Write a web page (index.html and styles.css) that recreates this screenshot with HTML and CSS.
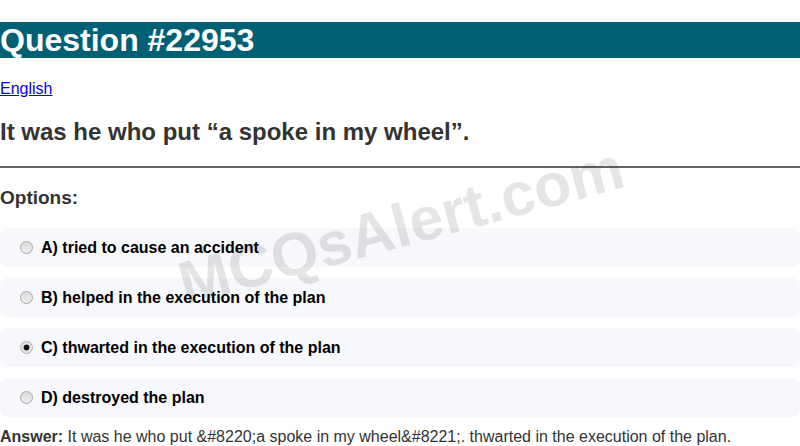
FILE: index.html
```html
<!DOCTYPE html>
<html lang="en">
<head>
<meta charset="utf-8">
<title>Question #22953</title>
<link rel="stylesheet" href="styles.css">
</head>
<body>
<h1 class="title">Question #22953</h1>
<p class="lang"><a href="#">English</a></p>
<h2 class="question">It was he who put “a spoke in my wheel”.</h2>
<hr class="rule">
<h3 class="options-head">Options:</h3>
<div class="options">
  <label class="option"><input type="radio" name="q" disabled> A) tried to cause an accident</label>
  <label class="option"><input type="radio" name="q" disabled> B) helped in the execution of the plan</label>
  <label class="option"><input type="radio" name="q" disabled checked> C) thwarted in the execution of the plan</label>
  <label class="option"><input type="radio" name="q" disabled> D) destroyed the plan</label>
</div>
<p class="answer"><b>Answer:</b> It was he who put &amp;#8220;a spoke in my wheel&amp;#8221;. thwarted in the execution of the plan.</p>
<div class="watermark">MCQsAlert.com</div>
</body>
</html>
```
FILE: styles.css
```css
html, body {
  margin: 0;
  padding: 0;
  background: #fff;
}
body {
  font-family: "Liberation Sans", Arial, sans-serif;
  color: #333;
  position: relative;
  overflow: hidden;
  height: 446px;
}
.title {
  margin: 22px 0 0;
  background: #026075;
  color: #fff;
  font-size: 32px;
  line-height: 36px;
  font-weight: bold;
}
.lang {
  margin: 22px 0 0;
  font-size: 16px;
  line-height: 18px;
}
.lang a {
  color: #0000ee;
}
.question {
  margin: 20px 0 0;
  font-size: 24px;
  line-height: 28px;
  font-weight: bold;
  color: #333;
}
.rule {
  margin: 20px 0 0;
  border: 0;
  border-top: 2px solid #666;
  height: 0;
}
.options-head {
  margin: 19px 0 0;
  font-size: 19px;
  line-height: 22px;
  font-weight: bold;
  color: #333;
}
.options {
  margin-top: 19px;
  display: flex;
  flex-direction: column;
  gap: 11px;
}
.option {
  display: flex;
  align-items: center;
  gap: 8px;
  background: #f7f8fc;
  border-radius: 8px;
  padding: 10px 15px 10px 20px;
  line-height: 19px;
  font-size: 16px;
  font-weight: bold;
  color: #000;
}
.option input {
  appearance: none;
  -webkit-appearance: none;
  margin: 0;
  width: 13px;
  height: 13px;
  flex: none;
  border-radius: 50%;
  border: 1px solid #a8a8a8;
  background: linear-gradient(#dcdcdc, #ececec);
  box-sizing: border-box;
  position: relative;
}
.option input:checked {
  background: radial-gradient(circle, #111 0 2.6px, #e2e2e2 3.3px);
  border-color: #b0b0b0;
}
.answer {
  margin: 11px 0 0;
  font-size: 16px;
  line-height: 18px;
  color: #333;
}
.answer b {
  color: #333;
}
.watermark {
  position: absolute;
  left: 401px;
  top: 226px;
  transform: translate(-50%, -50%) rotate(-15deg);
  font-size: 61px;
  font-weight: bold;
  color: rgba(0, 0, 0, 0.1);
  white-space: nowrap;
  pointer-events: none;
  line-height: 1;
}
```
